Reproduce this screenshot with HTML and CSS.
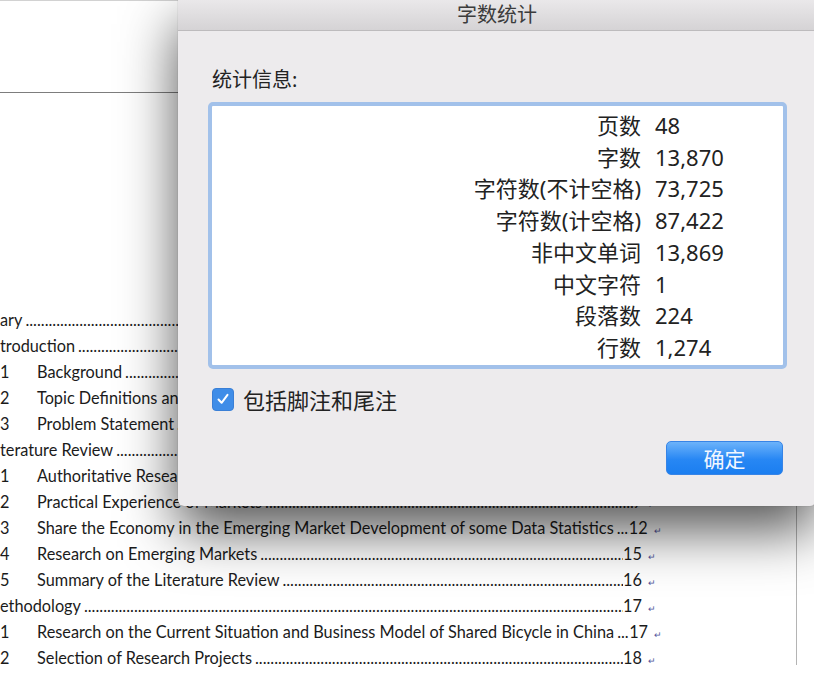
FILE: index.html
```html
<!DOCTYPE html>
<html lang="zh-CN">
<head>
    <meta charset="UTF-8">
    <title>字数统计</title>
    <link rel="stylesheet" href="styles.css">
</head>
<body>
    <div class="screen">
        <!-- Document page behind the sheet -->
        <div class="page">
            <div class="page-head"></div>
            <ul class="toc">
                <li class="toc-row"><span class="toc-title">ary</span><span class="leader"></span></li>
                <li class="toc-row"><span class="toc-title">troduction</span><span class="leader"></span></li>
                <li class="toc-row"><span class="toc-idx">1</span><span class="toc-title">Background</span><span class="leader"></span></li>
                <li class="toc-row"><span class="toc-idx">2</span><span class="toc-title">Topic Definitions and</span><span class="leader"></span></li>
                <li class="toc-row"><span class="toc-idx">3</span><span class="toc-title">Problem Statement</span><span class="leader"></span></li>
                <li class="toc-row"><span class="toc-title">terature Review</span><span class="leader"></span></li>
                <li class="toc-row"><span class="toc-idx">1</span><span class="toc-title">Authoritative Research</span><span class="leader"></span></li>
                <li class="toc-row"><span class="toc-idx">2</span><span class="toc-title">Practical Experience of Markets</span><span class="leader"></span><span class="toc-num">9</span><span class="pmark">&#8629;</span></li>
                <li class="toc-row"><span class="toc-idx">3</span><span class="toc-title">Share the Economy in the Emerging Market Development of some Data Statistics</span><span class="leader"></span><span class="toc-num">12</span><span class="pmark">&#8629;</span></li>
                <li class="toc-row"><span class="toc-idx">4</span><span class="toc-title">Research on Emerging Markets</span><span class="leader"></span><span class="toc-num">15</span><span class="pmark">&#8629;</span></li>
                <li class="toc-row"><span class="toc-idx">5</span><span class="toc-title">Summary of the Literature Review</span><span class="leader"></span><span class="toc-num">16</span><span class="pmark">&#8629;</span></li>
                <li class="toc-row"><span class="toc-title">ethodology</span><span class="leader"></span><span class="toc-num">17</span><span class="pmark">&#8629;</span></li>
                <li class="toc-row"><span class="toc-idx">1</span><span class="toc-title">Research on the Current Situation and Business Model of Shared Bicycle in China</span><span class="leader"></span><span class="toc-num">17</span><span class="pmark">&#8629;</span></li>
                <li class="toc-row"><span class="toc-idx">2</span><span class="toc-title">Selection of Research Projects</span><span class="leader"></span><span class="toc-num">18</span><span class="pmark">&#8629;</span></li>
            </ul>
        </div>

        <!-- Word count sheet -->
        <div class="dialog">
            <div class="dialog-title">字数统计</div>
            <div class="dialog-body">
                <div class="stats-label">统计信息:</div>
                <div class="stats-box">
                    <dl class="stats">
                        <dt>页数</dt><dd>48</dd>
                        <dt>字数</dt><dd>13,870</dd>
                        <dt>字符数(不计空格)</dt><dd>73,725</dd>
                        <dt>字符数(计空格)</dt><dd>87,422</dd>
                        <dt>非中文单词</dt><dd>13,869</dd>
                        <dt>中文字符</dt><dd>1</dd>
                        <dt>段落数</dt><dd>224</dd>
                        <dt>行数</dt><dd>1,274</dd>
                    </dl>
                </div>
                <label class="check-row">
                    <span class="checkbox">
                        <svg width="14" height="14" viewBox="0 0 14 14"><path d="M2.5 7.5 L5.6 10.8 L11.5 2.8" fill="none" stroke="#fff" stroke-width="2" stroke-linecap="round" stroke-linejoin="round"/></svg>
                    </span>
                    包括脚注和尾注
                </label>
                <div class="actions">
                    <button class="ok-btn">确定</button>
                </div>
            </div>
        </div>
    </div>
</body>
</html>
```

FILE: styles.css
```css
body {
    margin: 0;
    background: #fff;
    font-family: "Noto Sans", "Noto Sans CJK SC", sans-serif;
}
.screen {
    position: relative;
    width: 814px;
    height: 676px;
    overflow: hidden;
    background: #fff;
}
/* Document page */
.page {
    width: 797px;
    height: 665px;
    box-sizing: border-box;
    border-top: 1px solid #d2d2d2;
    border-right: 1px solid #b4b4b4;
    background: #fff;
}
.page-head {
    height: 91px;
    border-bottom: 1px solid #7d7d7d;
}
.toc {
    list-style: none;
    margin: 214px 0 0 0;
    padding: 0;
    width: 656px;
    font-family: Lato, "Open Sans", sans-serif;
    font-size: 16.3px;
    line-height: 26px;
    color: #1b1b1b;
}
.toc-row {
    display: flex;
    align-items: baseline;
    height: 26px;
}
.toc-idx {
    flex: none;
    width: 37px;
}
.toc-title {
    flex: none;
    white-space: nowrap;
}
.leader {
    flex: 1;
    overflow: hidden;
    white-space: nowrap;
    min-width: 8px;
    padding: 0 4px 0 3px;
}
.leader::after {
    content: "..............................................................................................................................................................................";
}
.toc-num {
    flex: none;
}
.pmark {
    flex: none;
    width: 8px;
    padding-left: 6px;
    font-size: 9px;
    color: #54569c;
}
/* Dialog sheet */
.dialog {
    position: absolute;
    left: 178px;
    top: 0;
    width: 638px;
    height: 506px;
    box-sizing: border-box;
    display: flex;
    flex-direction: column;
    background: #edebed;
    border-radius: 0 0 6px 6px;
    box-shadow: 0 24px 55px rgba(0, 0, 0, 0.68), 0 0 1px rgba(0, 0, 0, 0.45);
    color: #222;
}
.dialog-title {
    height: 30px;
    border-bottom: 1px solid #bdbbbd;
    background: linear-gradient(#eae8ea, #d5d3d5);
    text-align: center;
    font-size: 20px;
    line-height: 29px;
    color: #3c3c3c;
}
.dialog-body {
    flex: 1;
    display: flex;
    flex-direction: column;
    padding: 35px 29px 0 30px;
}
.stats-label {
    padding-left: 4px;
    margin-bottom: 8px;
    font-size: 20px;
    line-height: 28px;
}
.stats-box {
    height: 267px;
    box-sizing: border-box;
    border: 4px solid #a2c1ea;
    border-radius: 5px;
    background: #fff;
    padding-top: 4px;
}
.stats {
    display: grid;
    grid-template-columns: 429px auto;
    column-gap: 14px;
    margin: 0;
    font-size: 22px;
    line-height: 31.7px;
}
.stats dt {
    text-align: right;
}
.stats dd {
    margin: 0;
}
.check-row {
    display: flex;
    align-items: center;
    gap: 9px;
    height: 28px;
    margin-top: 16px;
    padding-left: 4px;
    font-size: 22px;
}
.checkbox {
    display: flex;
    align-items: center;
    justify-content: center;
    width: 22px;
    height: 23px;
    box-sizing: border-box;
    border-radius: 4px;
    background: #3f8de8;
    border: 1px solid #3a7fd6;
}
.actions {
    display: flex;
    justify-content: flex-end;
    margin-top: 28px;
    padding-right: 4px;
}
.ok-btn {
    width: 117px;
    height: 34px;
    border: 1px solid #3784e6;
    border-radius: 5px;
    background: linear-gradient(#6cb3fa, #2787f4 55%, #1b7ef0);
    color: #f2f7ff;
    font-family: "Noto Sans CJK SC", sans-serif;
    font-size: 21px;
    line-height: 30px;
    padding: 0;
}
```
